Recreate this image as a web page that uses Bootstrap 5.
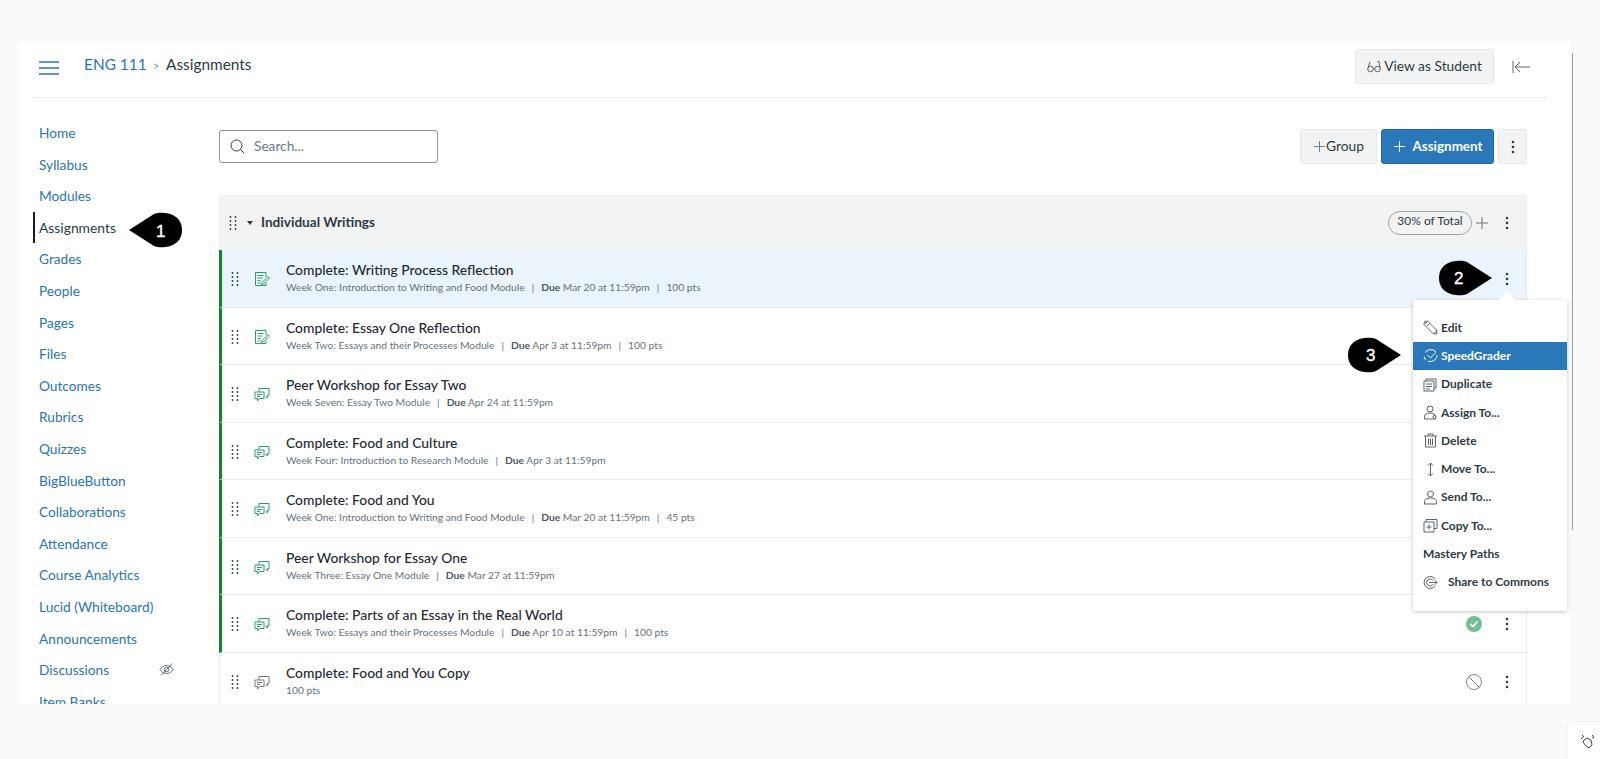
<!DOCTYPE html>
<html lang="en"><head><meta charset="utf-8"><title>Assignments</title>
<link href="https://cdn.jsdelivr.net/npm/bootstrap@5.3.0/dist/css/bootstrap.min.css" rel="stylesheet">
<style>
html,body{height:100%;overflow:hidden}
body{background:#fafafa;font-family:Lato,"Liberation Sans",sans-serif;color:#2d3b45;position:relative}
.cv-frame{position:absolute;left:19px;top:41px;width:1550px;height:663px;background:#fff;overflow:hidden}
.cv-scroll{position:absolute;left:1572px;top:53px;width:1px;height:477px;background:#9aa0a4}
.cv-top{height:57px;margin:0 22px 0 14px;border-bottom:1px solid #e8eaec;padding:8px 0 0 6px}
.cv-burger{width:20px;height:14px;margin-right:25px;margin-top:12px}
.cv-crumb{font-size:15.4px;margin-top:4px}
.cv-crumb a{color:#2b74b0;text-decoration:none}
.cv-sep{margin:0 6.500px;color:#8b969e;font-size:11px}
.cv-btn{background:#f2f3f4;border:1px solid #e6e8ea;border-radius:3px;color:#2d3b45;font-size:13.8px;height:35px;display:flex;align-items:center;justify-content:center;padding:0}
.cv-student{width:139px;gap:3px}
.cv-collapse{margin:11px 17px 0 18px}
.cv-body{padding-top:22px}
.cv-side{width:200px;flex:none;padding-left:20px;list-style:none;margin:-3px 0 0;font-size:13.7px}
.cv-side li{height:31.6px;line-height:31.6px;display:flex;justify-content:space-between;padding-right:45px}
.cv-side a{color:#2b74b0;text-decoration:none}
.cv-side li.cv-on{border-left:2px solid #1c1c1c;margin-left:-6px;padding-left:4px;font-size:13.85px}
.cv-side li.cv-on a{color:#2d3b45}
.cv-main{flex:1;min-width:0;margin-right:42px}
.cv-search{width:219px;height:33px;border:1px solid #8f979e;border-radius:3px;padding-left:10px;gap:9px;font-size:13.7px;color:#6d7883;margin-top:-1px}
.cv-group{width:77px}
.cv-add{width:113px;background:#2a78b9;border-color:#1f679f;color:#fff;font-weight:700;gap:7px;font-size:13.4px}
.cv-more{width:29px}
.cv-toolbar{height:35px;margin:9px 0 31px}
.cv-head{height:55px;background:#f2f3f3;border:1px solid #eceef0;border-bottom:0;padding:0 17px 0 9px;font-size:13.6px;font-weight:700}
.cv-head-t{margin-top:-2px}
.cv-tri{width:0;height:0;border-left:3px solid transparent;border-right:3px solid transparent;border-top:4px solid #2d3b45;margin:0 8px 0 10px}
.cv-pill{border:1px solid #9ea6ad;border-radius:12px;font-size:12px;font-weight:400;height:24px;width:84px;line-height:18px;text-align:center;margin-right:3px}
.cv-item{height:57.5px;border-bottom:1px solid #e8eaec;border-right:1px solid #e8eaec;border-left:1px solid #e8eaec;padding-right:17px;padding-left:11px}
.cv-item>svg{margin-top:2px}
.cv-done{border-left:3px solid #0b8a2c;padding-left:9px}
.cv-hi{background:#ebf4fb}
.cv-item>svg.cv-ico{width:16px;height:16px;margin:2px 16px 0 15px;flex:none}
.cv-green{color:#1d9a62}
.cv-name{font-size:13.85px;font-weight:500;color:#1f2a33;line-height:19px}
.cv-meta{font-size:10.25px;color:#66727c;line-height:17px}
.cv-meta b{color:#4b5760;font-weight:700}
.cv-meta span{margin:0 7px}
.cv-item>svg.cv-state{width:20px;height:20px;margin:2px 21px 0 0;flex:none}
.cv-menu{position:absolute;left:1413px;top:300px;width:154px;height:311px;background:#fff;box-shadow:0 1px 4px rgba(0,0,0,.22);padding-top:13.500px;font-size:12px;font-weight:700;color:#2d3b45;border-radius:2px}
.cv-menu::before{content:"";position:absolute;left:88px;top:-6px;width:12px;height:12px;background:#fff;transform:rotate(45deg)}
.cv-menu div{height:28.3px;display:flex;align-items:center;padding-left:10px;gap:3px;position:relative}
.cv-menu div.cv-sel{background:#2a78b9;color:#fff}
.cv-menu svg{width:15px;height:15px;flex:none}
.cv-wide{gap:10px!important}
.cv-tip{position:absolute;width:55px;height:36px}
.cv-tip text{font:400 17px "Liberation Sans",sans-serif;fill:#fff;stroke:#fff;stroke-width:.35px}
.cv-widget{position:absolute;left:1566px;top:721px;width:40px;height:42px;background:#fff;border:1px solid #eee;border-radius:6px;padding:6px 0 0 13px}
</style></head><body>
<svg width="0" height="0" class="position-absolute">
<symbol id="i-drag" viewBox="0 0 8 16"><g fill="#2d3b45"><circle cx="1.5" cy="2" r=".9"/><circle cx="6.5" cy="2" r=".9"/><circle cx="1.5" cy="6" r=".9"/><circle cx="6.5" cy="6" r=".9"/><circle cx="1.5" cy="10" r=".9"/><circle cx="6.5" cy="10" r=".9"/><circle cx="1.5" cy="14" r=".9"/><circle cx="6.5" cy="14" r=".9"/></g></symbol>
<symbol id="i-kebab" viewBox="0 0 4 16"><g fill="#2d3b45"><circle cx="2" cy="3" r="1.3"/><circle cx="2" cy="8" r="1.3"/><circle cx="2" cy="13" r="1.3"/></g></symbol>
<symbol id="i-assign" viewBox="0 0 16 16"><g fill="none" stroke="currentColor" stroke-width=".95"><path d="M12 6V1.500H1.500v13H12v-2.500"/><path d="M3.500 4.500h6M3.500 7h5M3.500 9.500h3M3.500 12h3"/><path d="M8 11.500l6-6 1.500 1.500-6 6-2 .5z"/></g></symbol>
<symbol id="i-disc" viewBox="0 0 16 16"><g fill="none" stroke="currentColor" stroke-width=".95"><path d="M1 6h9v6.500H5.500L3.500 15v-2.500H1z"/><path d="M5 6V2.500h10V9.500h-1.500V12L11.500 10"/><path d="M3 8.500h5M3 10.500h3"/></g></symbol>
<symbol id="i-plus" viewBox="0 0 14 14"><path d="M7 1v12M1 7h12" stroke="currentColor" fill="none"/></symbol>
</svg>
<div class="cv-frame">
  <div class="cv-top d-flex align-items-start">
    <svg class="cv-burger" viewBox="0 0 20 14"><path d="M0 1h20M0 7h20M0 13h20" stroke="#2b74b0" stroke-width="1.400"/></svg>
    <div class="cv-crumb"><a href="#">ENG 111</a><span class="cv-sep">&gt;</span>Assignments</div>
    <div class="ms-auto d-flex align-items-start">
      <button class="cv-btn cv-student"><svg width="14" height="14" viewBox="0 0 14 14" fill="none" stroke="#59646d"><circle cx="3.500" cy="9" r="2.800"/><circle cx="10.500" cy="9" r="2.800"/><path d="M1 8L3 2M13 8L12 1.500H10.500M6.300 8.500h1.400"/></svg>View as Student</button>
      <svg class="cv-collapse" width="18" height="14" viewBox="0 0 18 14" fill="none" stroke="#59646d"><path d="M1 1v12M18 7H3M8 2L3 7l5 5"/></svg>
    </div>
  </div>
  <div class="cv-body d-flex">
    <ul class="cv-side">
      <li><a href="#">Home</a></li><li><a href="#">Syllabus</a></li><li><a href="#">Modules</a></li>
      <li class="cv-on"><a href="#">Assignments</a></li>
      <li><a href="#">Grades</a></li><li><a href="#">People</a></li><li><a href="#">Pages</a></li><li><a href="#">Files</a></li><li><a href="#">Outcomes</a></li><li><a href="#">Rubrics</a></li><li><a href="#">Quizzes</a></li><li><a href="#">BigBlueButton</a></li><li><a href="#">Collaborations</a></li><li><a href="#">Attendance</a></li><li><a href="#">Course Analytics</a></li><li><a href="#">Lucid (Whiteboard)</a></li><li><a href="#">Announcements</a></li>
      <li><a href="#">Discussions</a><svg class="align-self-center" width="15" height="13" viewBox="0 0 15 13" fill="none" stroke="#66727c"><path d="M1 6.500C3 3.500 5 2.500 7.500 2.500s4.500 1 6.500 4c-2 3-4 4-6.500 4S3 9.500 1 6.500z"/><circle cx="7.500" cy="6.500" r="2.300"/><path d="M2 12.500L13 .5"/></svg></li>
      <li><a href="#">Item Banks</a></li>
    </ul>
    <div class="cv-main">
      <div class="cv-toolbar d-flex align-items-center justify-content-between">
        <div class="cv-search d-flex align-items-center"><svg width="15" height="15" viewBox="0 0 15 15" fill="none" stroke="#2d3b45"><circle cx="6.500" cy="6.500" r="5.500"/><path d="M10.500 10.500L14 14"/></svg>Search...</div>
        <div class="d-flex gap-1">
          <button class="cv-btn cv-group"><svg width="13" height="13" class="text-secondary"><use href="#i-plus"/></svg>Group</button>
          <button class="cv-btn cv-add"><svg width="13" height="13"><use href="#i-plus"/></svg>Assignment</button>
          <button class="cv-btn cv-more"><svg width="4" height="16"><use href="#i-kebab"/></svg></button>
        </div>
      </div>
      <div class="cv-head d-flex align-items-center">
        <svg width="8" height="16"><use href="#i-drag"/></svg><span class="cv-tri"></span><span class="cv-head-t">Individual Writings</span>
        <span class="cv-pill ms-auto">30% of Total</span>
        <svg width="14" height="14" class="text-secondary me-3"><use href="#i-plus"/></svg>
        <svg width="4" height="16"><use href="#i-kebab"/></svg>
      </div>
      <div class="cv-list">
        <div class="cv-item cv-done cv-hi d-flex align-items-center"><svg width="8" height="16"><use href="#i-drag"/></svg><svg class="cv-ico cv-green"><use href="#i-assign"/></svg><div><div class="cv-name">Complete: Writing Process Reflection</div><div class="cv-meta">Week One: Introduction to Writing and Food Module<span>|</span><b>Due</b> Mar 20 at 11:59pm<span>|</span>100 pts</div></div><svg class="ms-auto" width="4" height="16"><use href="#i-kebab"/></svg></div>
        <div class="cv-item cv-done d-flex align-items-center"><svg width="8" height="16"><use href="#i-drag"/></svg><svg class="cv-ico cv-green"><use href="#i-assign"/></svg><div><div class="cv-name">Complete: Essay One Reflection</div><div class="cv-meta">Week Two: Essays and their Processes Module<span>|</span><b>Due</b> Apr 3 at 11:59pm<span>|</span>100 pts</div></div></div>
        <div class="cv-item cv-done d-flex align-items-center"><svg width="8" height="16"><use href="#i-drag"/></svg><svg class="cv-ico cv-green"><use href="#i-disc"/></svg><div><div class="cv-name">Peer Workshop for Essay Two</div><div class="cv-meta">Week Seven: Essay Two Module<span>|</span><b>Due</b> Apr 24 at 11:59pm</div></div></div>
        <div class="cv-item cv-done d-flex align-items-center"><svg width="8" height="16"><use href="#i-drag"/></svg><svg class="cv-ico cv-green"><use href="#i-disc"/></svg><div><div class="cv-name">Complete: Food and Culture</div><div class="cv-meta">Week Four: Introduction to Research Module<span>|</span><b>Due</b> Apr 3 at 11:59pm</div></div></div>
        <div class="cv-item cv-done d-flex align-items-center"><svg width="8" height="16"><use href="#i-drag"/></svg><svg class="cv-ico cv-green"><use href="#i-disc"/></svg><div><div class="cv-name">Complete: Food and You</div><div class="cv-meta">Week One: Introduction to Writing and Food Module<span>|</span><b>Due</b> Mar 20 at 11:59pm<span>|</span>45 pts</div></div></div>
        <div class="cv-item cv-done d-flex align-items-center"><svg width="8" height="16"><use href="#i-drag"/></svg><svg class="cv-ico cv-green"><use href="#i-disc"/></svg><div><div class="cv-name">Peer Workshop for Essay One</div><div class="cv-meta">Week Three: Essay One Module<span>|</span><b>Due</b> Mar 27 at 11:59pm</div></div></div>
        <div class="cv-item cv-done d-flex align-items-center"><svg width="8" height="16"><use href="#i-drag"/></svg><svg class="cv-ico cv-green"><use href="#i-disc"/></svg><div><div class="cv-name">Complete: Parts of an Essay in the Real World</div><div class="cv-meta">Week Two: Essays and their Processes Module<span>|</span><b>Due</b> Apr 10 at 11:59pm<span>|</span>100 pts</div></div>
          <svg class="cv-state ms-auto" viewBox="0 0 20 20"><circle cx="10" cy="10" r="8" fill="#74bf92"/><path d="M6.500 10.200l2.500 2.300 4.500-5" fill="none" stroke="#fff" stroke-width="1.800"/></svg><svg width="4" height="16"><use href="#i-kebab"/></svg></div>
        <div class="cv-item d-flex align-items-center"><svg width="8" height="16"><use href="#i-drag"/></svg><svg class="cv-ico text-secondary"><use href="#i-disc"/></svg><div><div class="cv-name">Complete: Food and You Copy</div><div class="cv-meta">100 pts</div></div>
          <svg class="cv-state ms-auto" viewBox="0 0 20 20" fill="none" stroke="#7d8890"><circle cx="10" cy="10" r="7.500"/><path d="M4.700 4.700l10.600 10.600"/></svg><svg width="4" height="16"><use href="#i-kebab"/></svg></div>
      </div>
    </div>
  </div>
</div>
<div class="cv-scroll"></div>
<div class="cv-menu">
  <div><svg viewBox="0 0 15 15" fill="none" stroke="#59646d"><path d="M1.500 1.500l3-0.500 9 9 .5 4-4-.5-9-9z"/><path d="M2 4l2.500-2.500M4 6l2.500-2.500M11 13.500l2.500-2.500"/></svg>Edit</div>
  <div class="cv-sel"><svg viewBox="0 0 15 15" fill="none" stroke="#fff"><path d="M2 4.500A7 7 0 0 1 13 4M14 7a6.500 6.500 0 0 1-9 6M2.500 12L1 8.500"/><path d="M4.500 7l3 3 5-5.500"/></svg>SpeedGrader</div>
  <div><svg viewBox="0 0 15 15" fill="none" stroke="#59646d"><path d="M1 4h10v10H1zM3 4V2h10v9h-2M3 7h6M3 9.500h6M3 12h4"/></svg>Duplicate</div>
  <div><svg viewBox="0 0 15 15" fill="none" stroke="#59646d"><circle cx="7" cy="4" r="3"/><path d="M1.500 14v-2.500c0-2 2-3.500 5.500-3.500s5.500 1.500 5.500 3.500V14z"/><circle cx="11.500" cy="12" r="1.500" fill="#fff"/></svg>Assign To...</div>
  <div><svg viewBox="0 0 15 15" fill="none" stroke="#59646d"><path d="M1 3h13M5 3V1h5v2M2.500 3v11h10V3M5.500 5.500v6.500M7.500 5.500v6.500M9.500 5.500v6.500"/></svg>Delete</div>
  <div><svg viewBox="0 0 15 15" fill="none" stroke="#59646d"><path d="M7.500 1v13M5 3.500L7.500 1 10 3.500M5 11.500L7.500 14l2.500-2.500"/></svg>Move To...</div>
  <div><svg viewBox="0 0 15 15" fill="none" stroke="#59646d"><circle cx="7.500" cy="4" r="3"/><path d="M1.500 14v-2.500c0-2 2-3.500 6-3.500s6 1.500 6 3.500V14z"/></svg>Send To...</div>
  <div><svg viewBox="0 0 15 15" fill="none" stroke="#59646d"><path d="M1 4h10v10H1zM3 4V1.500h11v9h-3M6 6.500v5M3.500 9h5"/></svg>Copy To...</div>
  <div>Mastery Paths</div>
  <div class="cv-wide"><svg viewBox="0 0 15 15" fill="none" stroke="#59646d"><path d="M12 4A6 6 0 1 0 12 11M10 5.500A3.500 3.500 0 1 0 10 9.500M6 7.500h8M11.500 5l2.500 2.500-2.500 2.500"/></svg>Share to Commons</div>
</div>
<svg class="cv-tip" style="left:129px;top:212px" viewBox="0 0 55 36"><path d="M0 18L25 2C32-1 53 0 53 18S32 37 25 34z"/><text x="27" y="25">1</text></svg>
<svg class="cv-tip" style="left:1439px;top:260px" viewBox="0 0 55 36"><path d="M53 18L28 2C21-1 0 0 0 18S21 37 28 34z"/><text x="15" y="24">2</text></svg>
<svg class="cv-tip" style="left:1348px;top:337px" viewBox="0 0 55 36"><path d="M53 18L28 2C21-1 0 0 0 18S21 37 28 34z"/><text x="18" y="24">3</text></svg>
<div class="cv-widget"><svg width="15" height="15" viewBox="0 0 15 15" fill="none" stroke="#3a4650"><path d="M4 6l3-2 4 2 1 5-3 3-3-2-3-4zM1 5l2-2M2 1l2 2M12 1l2 2-2 1"/></svg></div>
<script src="https://cdn.jsdelivr.net/npm/bootstrap@5.3.0/dist/js/bootstrap.bundle.min.js"></script>
</body></html>
